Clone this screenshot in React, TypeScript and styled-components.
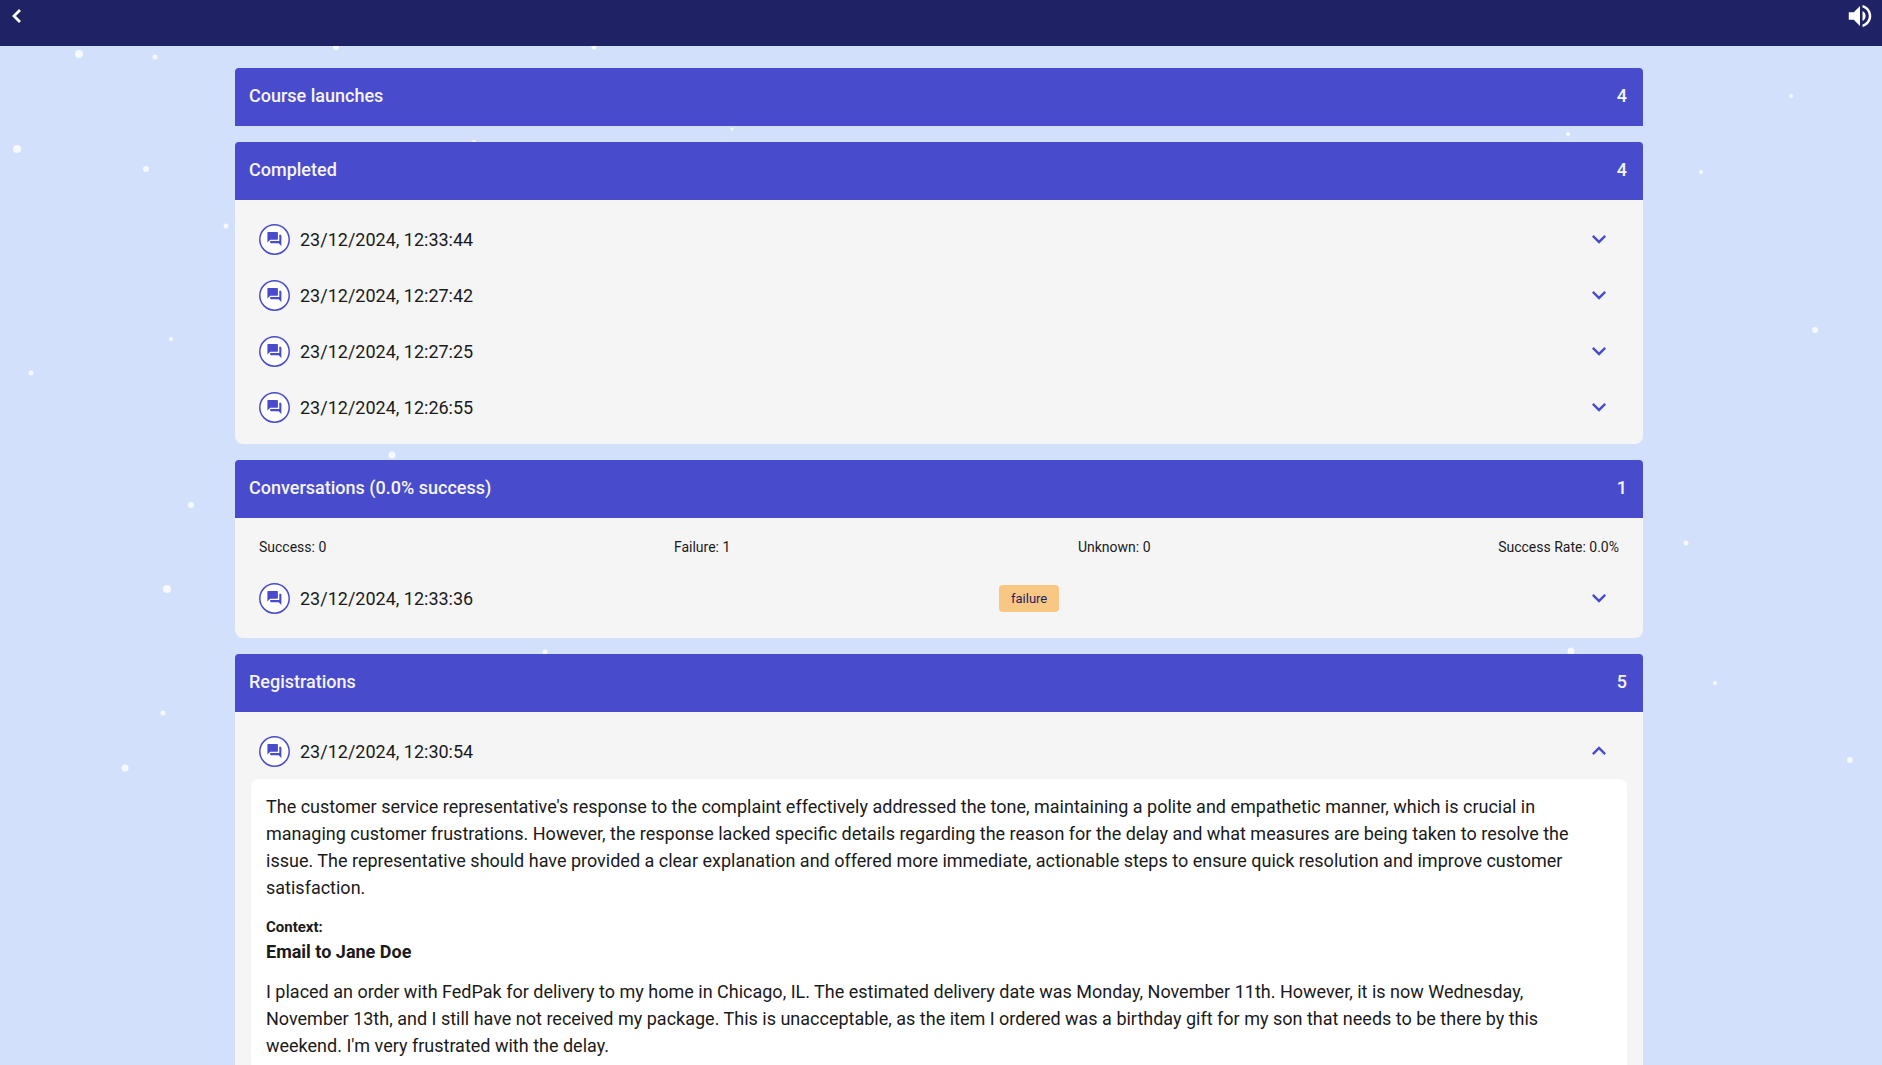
import React, { useState } from "react";
import styled, { createGlobalStyle } from "styled-components";
import { MdExpandMore, MdExpandLess, MdVolumeUp } from "react-icons/md";

const GlobalStyle = createGlobalStyle`
  *, *::before, *::after { box-sizing: border-box; }
  html, body { margin: 0; height: 100%; overflow: hidden; }
  body {
    background: #d2e0fb;
    color: #1a1a1a;
    font-family: Roboto, "Liberation Sans", sans-serif;
    font-size: 18px;
  }
  #root { height: 100%; }
  button { font: inherit; color: inherit; background: none; border: 0; padding: 0; cursor: pointer; }
`;

const Page = styled.div`
  position: relative;
  display: flex;
  flex-direction: column;
  height: 100vh;
  overflow: hidden;
`;

const TopBar = styled.header`
  position: relative;
  flex: none;
  display: flex;
  justify-content: space-between;
  align-items: flex-start;
  height: 46px;
  padding: 1px 7px 0 8px;
  background: #1f2264;
  color: #ffffff;
`;

const BarButton = styled.button`
  display: flex;
  align-items: center;
  justify-content: center;
  height: 30px;
`;

const Snow = styled.div`
  position: absolute;
  inset: 0;
  pointer-events: none;
`;

const Flake = styled.span<{ $x: number; $y: number; $size: number }>`
  position: absolute;
  left: ${(p) => p.$x}px;
  top: ${(p) => p.$y}px;
  width: ${(p) => p.$size}px;
  height: ${(p) => p.$size}px;
  border-radius: 50%;
  background: rgba(255, 255, 255, 0.8);
  transform: translate(-50%, -50%);
`;

const Scroller = styled.main`
  position: relative;
  flex: 1;
  min-height: 0;
  overflow: hidden;
  padding: 22px 20px 0 16px;
`;

const Column = styled.div`
  display: flex;
  flex-direction: column;
  gap: 16px;
  max-width: 1408px;
  margin: 0 auto;
`;

const Card = styled.section`
  display: flex;
  flex-direction: column;
`;

const CardHeader = styled.h2`
  display: flex;
  justify-content: space-between;
  align-items: center;
  height: 58px;
  margin: 0;
  padding: 0 16px 2px 14px;
  border-radius: 4px 4px 0 0;
  background: #494bcd;
  color: #f5f5f5;
  font-size: 18px;
  font-weight: 500;
  line-height: 28px;
`;

const CardBody = styled.div`
  display: flex;
  flex-direction: column;
  padding: 11px 16px 9px;
  border-radius: 0 0 8px 8px;
  background: #f5f5f5;
`;

const Stats = styled.div`
  display: flex;
  justify-content: space-between;
  padding: 8px 8px 10px;
  font-size: 14px;
  line-height: 20px;
`;

const Row = styled.button<{ $tall: boolean }>`
  display: flex;
  justify-content: space-between;
  align-items: center;
  height: ${(p) => (p.$tall ? 62 : 56)}px;
  padding: 0 14px 0 8px;
  text-align: left;
`;

const RowLabel = styled.span`
  display: flex;
  align-items: center;
  gap: 10px;
`;

const Chip = styled.span`
  padding: 4px 12px;
  border-radius: 4px;
  background: #f8c784;
  color: #1f2264;
  font-size: 13px;
  line-height: 19px;
`;

const RowArrow = styled.span`
  display: flex;
  color: #494bcd;
`;

const Detail = styled.article`
  padding: 14px 24px 14px 15px;
  border-radius: 8px;
  background: #ffffff;
  line-height: 27px;
`;

const Paragraph = styled.p`
  margin: 0 0 15px;
`;

const ContextLabel = styled.h3`
  margin: 0;
  font-size: 15px;
  font-weight: 700;
  line-height: 22px;
`;

const ContextTitle = styled.h4`
  margin: 0 0 13px;
  font-size: 18px;
  font-weight: 700;
  line-height: 27px;
`;

const flakes: [number, number, number][] = [
  [79, 54, 8], [155, 57, 5], [336, 47, 6], [594, 47, 5], [17, 149, 8], [146, 169, 6],
  [226, 226, 5], [171, 339, 4], [31, 373, 5], [191, 505, 6], [167, 589, 8], [163, 713, 5],
  [125, 768, 7], [392, 455, 7], [545, 652, 5], [1571, 651, 7], [1791, 96, 4], [1701, 172, 4],
  [1568, 134, 4], [1815, 330, 6], [1686, 543, 5], [1715, 683, 4], [1850, 760, 6],
  [732, 129, 3], [474, 142, 4],
];

const completed = [
  "23/12/2024, 12:33:44",
  "23/12/2024, 12:27:42",
  "23/12/2024, 12:27:25",
  "23/12/2024, 12:26:55",
];

function ForumBadge() {
  return (
    <svg width="31" height="31" viewBox="0 0 31 31" aria-hidden="true">
      <circle cx="15.5" cy="15.5" r="14.7" fill="#ffffff" stroke="#494bcd" strokeWidth="1.5" />
      <g transform="translate(7 6.6) scale(0.7)" fill="#494bcd">
        <path d="M21 6h-2v9H6v2c0 .55.45 1 1 1h11l4 4V7c0-.55-.45-1-1-1zm-4 6V3c0-.55-.45-1-1-1H3c-.55 0-1 .45-1 1v14l4-4h10c.55 0 1-.45 1-1z" />
      </g>
    </svg>
  );
}

function Entry({ time, status, open = false, children }: {
  time: string; status?: string; open?: boolean; children?: React.ReactNode;
}) {
  const [expanded, setExpanded] = useState(open);
  return (
    <>
      <Row
        type="button"
        $tall={Boolean(status)}
        aria-expanded={expanded}
        onClick={() => setExpanded(!expanded)}
      >
        <RowLabel>
          <ForumBadge />
          {time}
        </RowLabel>
        {status && <Chip>{status}</Chip>}
        <RowArrow>{expanded ? <MdExpandLess size={28} /> : <MdExpandMore size={28} />}</RowArrow>
      </Row>
      {expanded && children}
    </>
  );
}

function Heading({ title, count }: { title: string; count: number }) {
  return (
    <CardHeader>
      <span>{title}</span>
      <span>{count}</span>
    </CardHeader>
  );
}

export default function App() {
  return (
    <Page>
      <GlobalStyle />
      <Snow>
        {flakes.map(([x, y, size]) => (
          <Flake key={`${x}-${y}`} $x={x} $y={y} $size={size} />
        ))}
      </Snow>
      <TopBar>
        <BarButton type="button" aria-label="Back">
          <svg width="16" height="16" viewBox="0 0 16 16" fill="none" stroke="currentColor" strokeWidth="2.8">
            <path d="M12 2 L6 8 L12 14" />
          </svg>
        </BarButton>
        <BarButton type="button" aria-label="Sound"><MdVolumeUp size={30} /></BarButton>
      </TopBar>
      <Scroller>
        <Column>
          <Card>
            <Heading title="Course launches" count={4} />
          </Card>
          <Card>
            <Heading title="Completed" count={4} />
            <CardBody>
              {completed.map((time) => <Entry key={time} time={time} />)}
            </CardBody>
          </Card>
          <Card>
            <Heading title="Conversations (0.0% success)" count={1} />
            <CardBody>
              <Stats>
                <span>Success: 0</span>
                <span>Failure: 1</span>
                <span>Unknown: 0</span>
                <span>Success Rate: 0.0%</span>
              </Stats>
              <Entry time="23/12/2024, 12:33:36" status="failure" />
            </CardBody>
          </Card>
          <Card>
            <Heading title="Registrations" count={5} />
            <CardBody>
              <Entry time="23/12/2024, 12:30:54" open>
                <Detail>
                  <Paragraph>
                    The customer service representative's response to the complaint effectively addressed the
                    tone, maintaining a polite and empathetic manner, which is crucial in managing customer
                    frustrations. However, the response lacked specific details regarding the reason for the
                    delay and what measures are being taken to resolve the issue. The representative should
                    have provided a clear explanation and offered more immediate, actionable steps to ensure
                    quick resolution and improve customer satisfaction.
                  </Paragraph>
                  <ContextLabel>Context:</ContextLabel>
                  <ContextTitle>Email to Jane Doe</ContextTitle>
                  <Paragraph>
                    I placed an order with FedPak for delivery to my home in Chicago, IL. The estimated
                    delivery date was Monday, November 11th. However, it is now Wednesday, November 13th, and
                    I still have not received my package. This is unacceptable, as the item I ordered was a
                    birthday gift for my son that needs to be there by this weekend. I'm very frustrated with
                    the delay.
                  </Paragraph>
                </Detail>
              </Entry>
            </CardBody>
          </Card>
        </Column>
      </Scroller>
    </Page>
  );
}
